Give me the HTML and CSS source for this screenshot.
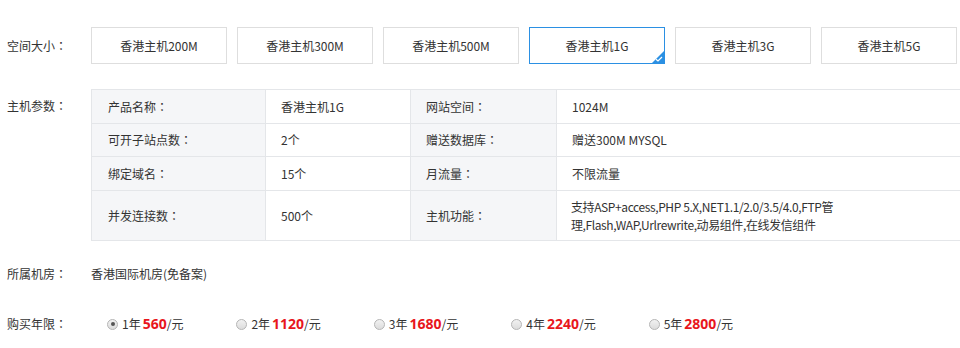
FILE: index.html
```html
<!DOCTYPE html>
<html lang="zh-CN">
<head>
<meta charset="utf-8">
<title>香港主机</title>
<link rel="stylesheet" href="styles.css">
</head>
<body>
<div class="page">
  <div class="row row-size">
    <div class="label">空间大小<span class="colon" lang="zh-Hant">：</span></div>
    <div class="sizes">
      <div class="size-btn">香港主机200M</div>
      <div class="size-btn">香港主机300M</div>
      <div class="size-btn">香港主机500M</div>
      <div class="size-btn active">香港主机1G
        <span class="corner"><svg width="8" height="6" viewBox="0 0 8 6"><path d="M1 3.2 L3 5 L7 1" fill="none" stroke="#fff" stroke-width="1.2"/></svg></span>
      </div>
      <div class="size-btn">香港主机3G</div>
      <div class="size-btn">香港主机5G</div>
    </div>
  </div>

  <div class="row row-params">
    <div class="label label-params">主机参数<span class="colon" lang="zh-Hant">：</span></div>
    <div class="table-wrap">
      <table class="params">
        <colgroup>
          <col class="c1"><col class="c2"><col class="c3"><col class="c4">
        </colgroup>
        <tr class="r1">
          <td class="k">产品名称<span class="colon" lang="zh-Hant">：</span></td><td class="v">香港主机1G</td>
          <td class="k">网站空间<span class="colon" lang="zh-Hant">：</span></td><td class="v">1024M</td>
        </tr>
        <tr class="r2">
          <td class="k">可开子站点数<span class="colon" lang="zh-Hant">：</span></td><td class="v">2个</td>
          <td class="k">赠送数据库<span class="colon" lang="zh-Hant">：</span></td><td class="v">赠送300M MYSQL</td>
        </tr>
        <tr class="r3">
          <td class="k">绑定域名<span class="colon" lang="zh-Hant">：</span></td><td class="v">15个</td>
          <td class="k">月流量<span class="colon" lang="zh-Hant">：</span></td><td class="v">不限流量</td>
        </tr>
        <tr class="r4">
          <td class="k">并发连接数<span class="colon" lang="zh-Hant">：</span></td><td class="v">500个</td>
          <td class="k">主机功能<span class="colon" lang="zh-Hant">：</span></td><td class="v features">支持ASP+access,PHP 5.X,NET1.1/2.0/3.5/4.0,FTP管<br>理,Flash,WAP,Urlrewrite,动易组件,在线发信组件</td>
        </tr>
      </table>
    </div>
  </div>

  <div class="row row-room">
    <div class="label">所属机房<span class="colon" lang="zh-Hant">：</span></div>
    <div class="room">香港国际机房(免备案)</div>
  </div>

  <div class="row row-years">
    <div class="label">购买年限<span class="colon" lang="zh-Hant">：</span></div>
    <div class="years">
      <label class="year"><span class="radio checked"></span>1年<b class="price">560</b>/元</label>
      <label class="year"><span class="radio"></span>2年<b class="price">1120</b>/元</label>
      <label class="year"><span class="radio"></span>3年<b class="price">1680</b>/元</label>
      <label class="year"><span class="radio"></span>4年<b class="price">2240</b>/元</label>
      <label class="year"><span class="radio"></span>5年<b class="price">2800</b>/元</label>
    </div>
  </div>
</div>
</body>
</html>
```

FILE: styles.css
```css
html, body {
  margin: 0;
  padding: 0;
  background: #fff;
  overflow: hidden;
}
body {
  font-family: "Noto Sans CJK SC", "Microsoft YaHei", sans-serif;
  font-size: 12px;
  color: #333;
  line-height: 18px;
}
.colon {
  font-family: "Noto Sans CJK TC", sans-serif;
}
.page {
  padding-top: 27px;
}
.row {
  display: flex;
  align-items: center;
}
.label {
  width: 84px;
  padding-left: 7px;
  flex: none;
}
.sizes {
  display: flex;
  gap: 10px;
}
.size-btn {
  position: relative;
  box-sizing: border-box;
  width: 136px;
  height: 37px;
  border: 1px solid #dedede;
  display: flex;
  align-items: center;
  justify-content: center;
  background: #fff;
}
.size-btn.active {
  border-color: #2b90e3;
}
.corner {
  position: absolute;
  right: 0;
  bottom: 0;
  width: 0;
  height: 0;
  border-style: solid;
  border-width: 0 0 12px 12px;
  border-color: transparent transparent #2b90e3 transparent;
}
.corner svg {
  position: absolute;
  right: 1px;
  top: 5px;
}
.row-params {
  margin-top: 25px;
  align-items: flex-start;
}
.label-params {
  padding-top: 8px;
}
.table-wrap {
  flex: 1;
  overflow: hidden;
}
.params {
  border-collapse: collapse;
  width: 880px;
  table-layout: fixed;
}
.params col.c1 { width: 174px; }
.params col.c2 { width: 145px; }
.params col.c3 { width: 146px; }
.params td {
  border: 1px solid #e4e6e9;
  padding: 0 15px;
  vertical-align: middle;
  white-space: nowrap;
}
.params td.k {
  background: #f5f6f8;
}
.params td.k:first-child {
  padding-left: 16px;
}
.params td.v {
  background: #fff;
}
.params td.features {
  padding-left: 14px;
  letter-spacing: -0.4px;
}
.params tr.r1 td { height: 33px; }
.params tr.r2 td { height: 32px; }
.params tr.r3 td { height: 33px; }
.params tr.r4 td { height: 49px; }
.row-room {
  margin-top: 24px;
}
.row-years {
  margin-top: 32px;
}
.years {
  display: flex;
  gap: 53px;
  padding-left: 16px;
}
.year {
  display: flex;
  align-items: center;
}
.radio {
  box-sizing: border-box;
  width: 11px;
  height: 11px;
  border-radius: 50%;
  border: 1px solid #b5b5b5;
  background: linear-gradient(#f2f2f2, #dcdcdc);
  margin-right: 4px;
  position: relative;
}
.radio.checked::after {
  content: "";
  position: absolute;
  left: 2.5px;
  top: 2.5px;
  width: 4px;
  height: 4px;
  border-radius: 50%;
  background: #555;
}
.price {
  color: #e8161c;
  font-weight: bold;
  font-size: 14px;
  margin-left: 2px;
  font-family: "Open Sans", "Noto Sans CJK SC", sans-serif;
}
```
